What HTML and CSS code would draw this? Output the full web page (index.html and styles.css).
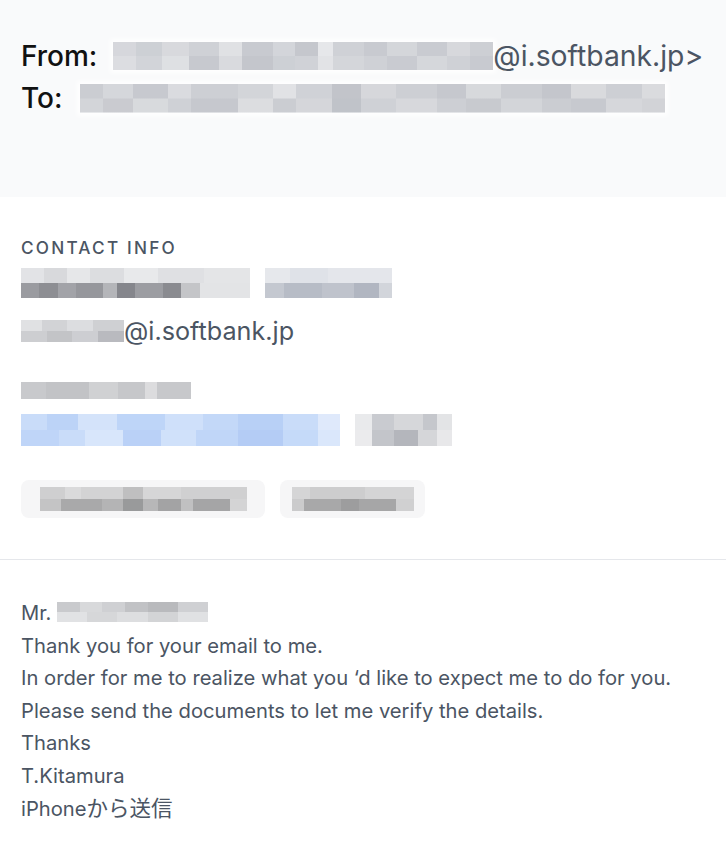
FILE: index.html
```html
<!DOCTYPE html>
<html lang="en">
<head>
<meta charset="utf-8">
<title>Email</title>
<link rel="stylesheet" href="styles.css">
</head>
<body>
<header class="header">
  <div class="hrow">
    <span class="hlabel">From:</span>
    <span class="mosaic m-from"></span>
    <span class="haddr">@i.softbank.jp&gt;</span>
  </div>
  <div class="hrow">
    <span class="hlabel">To:</span>
    <span class="mosaic m-to"></span>
  </div>
</header>

<section class="contact">
  <h2 class="ctitle">CONTACT INFO</h2>
  <div class="crow name-row">
    <span class="mosaic m-name"></span>
    <span class="mosaic m-company"></span>
  </div>
  <div class="crow email-row">
    <span class="mosaic m-user"></span><span class="cemail">@i.softbank.jp</span>
  </div>
  <div class="crow phone-label">
    <span class="mosaic m-label"></span>
  </div>
  <div class="crow link-row">
    <span class="mosaic m-link"></span>
    <span class="mosaic m-linkx"></span>
  </div>
  <div class="chips">
    <span class="chip chip-a"><span class="mosaic m-chip-a"></span></span>
    <span class="chip chip-b"><span class="mosaic m-chip-b"></span></span>
  </div>
</section>

<section class="body">
  <p class="line">Mr. <span class="mosaic m-mr"></span></p>
  <p class="line">Thank you for your email to me.</p>
  <p class="line">In order for me to realize what you ‘d like to expect me to do for you.</p>
  <p class="line">Please send the documents to let me verify the details.</p>
  <p class="line">Thanks</p>
  <p class="line">T.Kitamura</p>
  <p class="line">iPhone<span class="cjk">から送信</span></p>
</section>
</body>
</html>
```

FILE: styles.css
```css
html, body {
  margin: 0;
  padding: 0;
  background: #ffffff;
}
body {
  font-family: Inter, "Noto Sans CJK JP", sans-serif;
  color: #4b5563;
  width: 726px;
}

.mosaic {
  display: inline-block;
  vertical-align: middle;
  box-shadow: 0 0 5px 3px rgba(255, 255, 255, 0.9);
}

/* ---------- header ---------- */
.header {
  background: #f9fafb;
  height: 197px;
  box-sizing: border-box;
  padding: 35px 21px 0;
}
.hrow {
  display: flex;
  align-items: center;
  height: 42px;
}
.hlabel {
  font-size: 28px;
  font-weight: 500;
  color: #111111;
}
.haddr {
  font-size: 28.3px;
  color: #4b5563;
}
.m-from {
  margin-left: 16px;
  width: 380px;
  height: 28px;
  background:
    linear-gradient(90deg, #d6d7dc 0 6%, #cdd0d5 6% 13%, #d8d9dd 13% 20%, #cfd1d6 20% 28%, #e0e1e4 28% 34%, #c8cad0 34% 42%, #d3d5da 42% 48%, #c5c7cd 48% 54%, #e6e7ea 54% 58%, #cfd1d6 58% 66%, #c8cad0 66% 72%, #d4d6da 72% 80%, #c9cbd1 80% 88%, #d7d8dc 88% 94%, #cdcfd4 94% 100%) top / 100% 50% no-repeat,
    linear-gradient(90deg, #dcdde1 0 6%, #d2d4d9 6% 13%, #dee0e3 13% 20%, #c7c9cf 20% 28%, #d9dade 28% 34%, #c4c6cc 34% 42%, #cdd0d5 42% 48%, #d0d2d7 48% 54%, #e2e3e6 54% 58%, #d4d6da 58% 66%, #cfd1d6 66% 72%, #c9cbd1 72% 80%, #d5d7db 80% 88%, #cfd1d6 88% 94%, #c8cad0 94% 100%) bottom / 100% 50% no-repeat;
}
.m-to {
  margin-left: 17px;
  width: 585px;
  height: 29px;
  background:
    linear-gradient(90deg, #cbcdd2 0 4%, #d5d7db 4% 9%, #c7c9cf 9% 15%, #dadbdf 15% 19%, #cdcfd4 19% 27%, #d3d5d9 27% 33%, #e1e2e5 33% 37%, #d0d2d7 37% 43%, #c2c4ca 43% 48%, #d6d7db 48% 54%, #cdcfd4 54% 61%, #c6c8ce 61% 66%, #d7d9dc 66% 72%, #cbcdd2 72% 79%, #c4c6cc 79% 84%, #d9dadd 84% 90%, #cdcfd4 90% 96%, #dadbde 96% 100%) top / 100% 50% no-repeat,
    linear-gradient(90deg, #d3d5d9 0 4%, #cacbd0 4% 9%, #d8dadd 9% 15%, #cfd1d6 15% 19%, #c6c8ce 19% 27%, #dcdde0 27% 33%, #cbcdd2 33% 37%, #d5d6da 37% 43%, #c0c3c9 43% 48%, #cfd1d6 48% 54%, #d7d8dc 54% 61%, #cdcfd4 61% 66%, #c8cacf 66% 72%, #d3d5d9 72% 79%, #cbcdd2 79% 84%, #c7c9cf 84% 90%, #d6d7db 90% 96%, #d2d3d7 96% 100%) bottom / 100% 50% no-repeat;
}

/* ---------- contact ---------- */
.contact {
  padding: 39px 21px 0;
  border-bottom: 1px solid #e5e7eb;
  height: 363px;
  box-sizing: border-box;
}
.ctitle {
  margin: 0;
  font-size: 17.2px;
  font-weight: 500;
  letter-spacing: 2.2px;
  line-height: 24px;
  color: #4b5563;
}
.crow {
  display: flex;
  align-items: center;
}
.name-row {
  margin-top: 7px;
  height: 32px;
  gap: 15px;
}
.m-name {
  width: 229px;
  height: 30px;
  background:
    linear-gradient(90deg, #e2e3e6 0 10%, #d8d9dc 10% 20%, #e6e7e9 20% 30%, #dcdde0 30% 45%, #e8e9eb 45% 60%, #dfe0e3 60% 80%, #e4e5e7 80% 100%) top / 100% 50% no-repeat,
    linear-gradient(90deg, #9a9ba0 0 8%, #8d8e93 8% 16%, #a2a3a8 16% 24%, #96979c 24% 36%, #b4b5b9 36% 42%, #85868c 42% 50%, #9c9da2 50% 62%, #8a8b90 62% 70%, #c4c5c8 70% 78%, #e3e4e6 78% 100%) bottom / 100% 50% no-repeat;
}
.m-company {
  width: 127px;
  height: 30px;
  background:
    linear-gradient(90deg, #e6e8ec 0 20%, #dfe2e8 20% 50%, #e4e6eb 50% 100%) top / 100% 50% no-repeat,
    linear-gradient(90deg, #c4c8d0 0 15%, #b7bcc6 15% 45%, #bfc3cc 45% 70%, #b1b6c1 70% 90%, #d2d5db 90% 100%) bottom / 100% 50% no-repeat;
}
.email-row {
  margin-top: 16px;
  height: 32px;
}
.m-user {
  width: 103px;
  height: 22px;
  background:
    linear-gradient(90deg, #e0e1e3 0 20%, #d2d3d6 20% 45%, #dcdde0 45% 70%, #cfd0d3 70% 100%) top / 100% 50% no-repeat,
    linear-gradient(90deg, #cdced1 0 25%, #c3c4c7 25% 50%, #cdced2 50% 75%, #b9babf 75% 100%) bottom / 100% 50% no-repeat;
}
.cemail {
  font-size: 25.2px;
  color: #4b5563;
}
.phone-label {
  margin-top: 35px;
  height: 17px;
}
.m-label {
  width: 170px;
  height: 17px;
  background: linear-gradient(90deg, #c8c9cc 0 15%, #c2c3c6 15% 40%, #d0d1d3 40% 57%, #c6c7ca 57% 73%, #dcdcde 73% 80%, #c7c8cb 80% 100%);
}
.link-row {
  margin-top: 15px;
  height: 32px;
  gap: 15px;
}
.m-link {
  width: 319px;
  height: 32px;
  background:
    linear-gradient(90deg, #c9dcf9 0 8%, #bcd3f7 8% 18%, #d4e3fa 18% 30%, #bed5f8 30% 45%, #cfe0fa 45% 57%, #c3d8f8 57% 68%, #b8d0f6 68% 82%, #c9dcf9 82% 93%, #dfe9fb 93% 100%) top / 100% 50% no-repeat,
    linear-gradient(90deg, #bfd5f8 0 12%, #c9dcf9 12% 20%, #d8e6fb 20% 32%, #bad1f7 32% 44%, #d0e1fa 44% 55%, #c0d6f8 55% 68%, #b4ccf5 68% 82%, #c5daf9 82% 93%, #dae7fb 93% 100%) bottom / 100% 50% no-repeat;
}
.m-linkx {
  width: 97px;
  height: 32px;
  background:
    linear-gradient(90deg, #e9eaec 0 18%, #c9cbd0 18% 40%, #d6d7da 40% 70%, #c5c7cc 70% 85%, #e3e4e6 85% 100%) top / 100% 50% no-repeat,
    linear-gradient(90deg, #ebebed 0 18%, #c3c5ca 18% 40%, #b4b6bc 40% 65%, #d5d6d9 65% 85%, #e8e8ea 85% 100%) bottom / 100% 50% no-repeat;
}
.chips {
  display: flex;
  gap: 15px;
  margin-top: 34px;
}
.chip {
  display: flex;
  align-items: center;
  justify-content: center;
  height: 38px;
  border-radius: 8px;
  background: #f6f6f7;
}
.chip-a { width: 244px; }
.chip-b { width: 145px; }
.chip .mosaic { box-shadow: none; }
.m-chip-a {
  width: 207px;
  height: 24px;
  background:
    linear-gradient(90deg, #cfcfd0 0 12%, #dadadb 12% 20%, #d3d3d4 20% 40%, #bfbfc0 40% 50%, #d6d6d7 50% 68%, #d0d0d1 68% 100%) top / 100% 50% no-repeat,
    linear-gradient(90deg, #c4c4c5 0 10%, #a9a9aa 10% 30%, #b4b4b5 30% 40%, #999a9b 40% 50%, #b7b7b8 50% 57%, #a3a3a4 57% 68%, #c0c0c1 68% 74%, #a5a5a6 74% 92%, #d4d4d5 92% 100%) bottom / 100% 50% no-repeat;
}
.m-chip-b {
  width: 122px;
  height: 24px;
  background:
    linear-gradient(90deg, #d5d5d6 0 15%, #cdcdce 15% 60%, #d4d4d5 60% 100%) top / 100% 50% no-repeat,
    linear-gradient(90deg, #cbcbcc 0 10%, #a8a8a9 10% 40%, #9d9d9e 40% 55%, #a6a6a7 55% 85%, #d0d0d1 85% 100%) bottom / 100% 50% no-repeat;
}

/* ---------- body ---------- */
.body {
  padding: 37px 21px 0;
}
.line {
  margin: 0;
  font-size: 20.2px;
  line-height: 32.5px;
  color: #4b5563;
}
.cjk {
  font-size: 21.5px;
}
.m-mr {
  width: 151px;
  height: 20px;
  margin-left: 0;
  margin-top: -4px;
  background:
    linear-gradient(90deg, #c9cacd 0 15%, #d8d9db 15% 30%, #cfd0d3 30% 45%, #c1c2c5 45% 60%, #b9babd 60% 80%, #cfd0d3 80% 100%) top / 100% 50% no-repeat,
    linear-gradient(90deg, #e1e2e4 0 20%, #d6d7d9 20% 40%, #dddee0 40% 60%, #d3d4d6 60% 80%, #e0e1e3 80% 100%) bottom / 100% 50% no-repeat;
}
```
